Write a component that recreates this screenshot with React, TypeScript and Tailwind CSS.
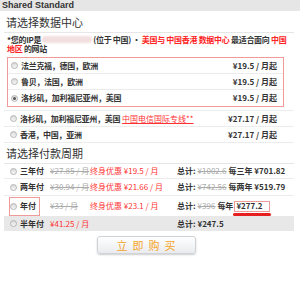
const cjk = { fontFamily: '"Noto Sans CJK SC", "Noto Sans", sans-serif' };

function Radio({ checked = false }: { checked?: boolean }) {
    return (
        <span className="flex h-[7px] w-[7px] shrink-0 items-center justify-center rounded-full border border-[#b5b5b5] bg-gradient-to-b from-[#d8d8d8] to-[#f8f8f8]">
            {checked && <span className="h-[3px] w-[3px] rounded-full bg-[#555]" />}
        </span>
    );
}

const centers = [
    { name: "法兰克福，德国，欧洲", price: "¥19.5 / 月起" },
    { name: "鲁贝，法国，欧洲", price: "¥19.5 / 月起" },
    { name: "洛杉矶，加利福尼亚州，美国", price: "¥19.5 / 月起", checked: true },
];

const terms = [
    { label: "三年付", old: "¥27.85 / 月", deal: "终身优惠 ¥19.5 / 月", oldTotal: "¥1002.6", per: "每三年", total: "¥701.82", h: "h-[15px]" },
    { label: "两年付", old: "¥30.94 / 月", deal: "终身优惠 ¥21.66 / 月", oldTotal: "¥742.56", per: "每两年", total: "¥519.79", h: "h-[17px]" },
];

export default function App() {
    return (
        <div className="h-[295px] w-[300px] overflow-hidden bg-white text-[#333]" style={cjk}>
            {/* Header */}
            <div className="flex h-[11px] items-center bg-[#e6e6e6] pl-[2px] text-[9px] font-bold leading-none text-[#333]" style={{ fontFamily: '"Liberation Sans", Arial, sans-serif' }}>
                Shared Standard
            </div>

            <div className="ml-[4px] w-[290px]">
                {/* Data center */}
                <div className="flex h-[22px] items-center border-b border-[#e6e6e6] pl-[2px] pt-[1px] text-[11px] leading-none">
                    请选择数据中心
                </div>

                <div className="pl-[3px] pt-[2px] text-[8px] font-bold leading-[9px] tracking-[-0.3px]">
                    <div className="flex h-[9px] items-center whitespace-nowrap">
                        <span>*您的IP是</span>
                        <span className="mx-[1px] h-[7px] w-[50px] rounded-[3px] bg-[#f2dede] blur-[1px]" />
                        <span>(位于 中国) •&nbsp;</span>
                        <span className="text-[#f22]">美国与 中国香港 数据中心</span>
                        <span>&nbsp;最适合面向&nbsp;</span>
                        <span className="text-[#f22]">中国</span>
                    </div>
                    <div className="h-[9px]">
                        <span className="text-[#f22]">地区</span> 的网站
                    </div>
                </div>

                <div className="ml-[3px] mt-[4px] w-[277px] border border-[#f09a9a]">
                    {centers.map((c, i) => (
                        <div key={i} className={`flex h-[16px] items-center pl-[3px] pr-[6px] text-[8px] font-bold ${i < 2 ? "border-b border-[#ececec]" : ""}`}>
                            <Radio checked={c.checked} />
                            <span className="ml-[3px] tracking-[-0.3px]">{c.name}</span>
                            <span className="ml-auto">{c.price}</span>
                        </div>
                    ))}
                </div>

                <div className="mt-[3px] border-t border-[#ececec]">
                    <div className="flex h-[16px] items-center border-b border-[#ececec] pl-[6px] pr-[17px] text-[8px] font-bold">
                        <Radio />
                        <span className="ml-[3px] tracking-[-0.3px]">洛杉矶，加利福尼亚州，美国</span>
                        <span className="ml-[2px] font-normal text-[#f33] underline">中国电信国际专线**</span>
                        <span className="ml-auto">¥27.17 / 月起</span>
                    </div>
                    <div className="flex h-[16px] items-center border-b border-[#ececec] pl-[6px] pr-[17px] text-[8px] font-bold">
                        <Radio />
                        <span className="ml-[3px] tracking-[-0.3px]">香港，中国，亚洲</span>
                        <span className="ml-auto">¥27.17 / 月起</span>
                    </div>
                </div>

                {/* Payment term */}
                <div className="flex h-[21px] items-center border-b border-[#e6e6e6] pl-[2px] text-[11px] leading-none">
                    请选择付款周期
                </div>

                {terms.map((t, i) => (
                    <div key={i} className={`flex ${t.h} items-center border-b border-[#ececec] pl-[6px] text-[8px] whitespace-nowrap`}>
                        <Radio />
                        <span className="ml-[3px] w-[30px] font-bold">{t.label}</span>
                        <span className="w-[40px] text-[#aaa] line-through">{t.old}</span>
                        <span className="w-[87px] text-[#f33]">{t.deal}</span>
                        <span className="font-bold">总计:</span>
                        <span className="ml-[2px] text-[#aaa] line-through">{t.oldTotal}</span>
                        <span className="ml-[2px] font-bold">{t.per} {t.total}</span>
                    </div>
                ))}

                <div className="flex h-[20px] items-center pl-[5px] text-[8px] whitespace-nowrap">
                    <div className="flex h-[19px] w-[31px] items-center border border-[#f09a9a]">
                        <Radio />
                        <span className="ml-[3px] font-bold">年付</span>
                    </div>
                    <span className="ml-[10px] w-[40px] text-[#aaa] line-through">¥33 / 月</span>
                    <span className="w-[87px] text-[#f33]">终身优惠 ¥23.1 / 月</span>
                    <span className="font-bold">总计:</span>
                    <span className="ml-[2px] text-[#aaa] line-through">¥396</span>
                    <span className="ml-[2px] font-bold">每年</span>
                    <span className="relative ml-[1px] flex h-[11px] w-[36px] items-center border border-[#f09a9a] pl-[1px] font-bold">
                        ¥277.2
                        <span className="absolute -bottom-[5px] -left-[2px] h-[3px] w-[38px] rounded-full bg-[#e62020]" />
                    </span>
                </div>

                <div className="flex h-[15px] items-center bg-[#e8e8e8] pl-[6px] text-[8px] whitespace-nowrap">
                    <Radio />
                    <span className="ml-[3px] w-[30px] font-bold">半年付</span>
                    <span className="w-[127px] text-[#f33]">¥41.25 / 月</span>
                    <span className="font-bold">总计: ¥247.5</span>
                </div>

                {/* Buy */}
                <div className="mt-[5px] flex justify-center pr-[6px]">
                    <button className="flex h-[18px] w-[99px] items-center justify-center rounded-[3px] border border-[#cfd3d8] bg-gradient-to-b from-white to-[#e9ebee] pl-[5px] text-[11px] tracking-[5px] text-[#f5a52a] shadow-[0_1px_2px_rgba(0,0,0,0.2)]">
                        立即购买
                    </button>
                </div>
            </div>
        </div>
    );
}
